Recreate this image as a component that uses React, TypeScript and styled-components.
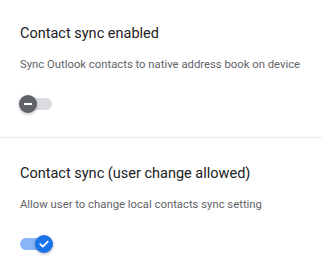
import React from "react";
import styled, { createGlobalStyle } from "styled-components";

const Global = createGlobalStyle`
  html, body { margin: 0; padding: 0; background: #ffffff; }
  body { font-family: Roboto, "Liberation Sans", Arial, sans-serif; }
`;

const Page = styled.div`
  width: 322px;
  display: flex;
  flex-direction: column;
`;

const Section = styled.section`
  display: flex;
  flex-direction: column;
  align-items: flex-start;
  padding: 24px 20px 24px;
`;

const Title = styled.h2`
  margin: 0;
  font-size: 14.5px;
  line-height: 20px;
  font-weight: 400;
  color: #202124;
`;

const Description = styled.p`
  margin: 13px 0 0;
  font-size: 11.3px;
  line-height: 15px;
  color: #5f6368;
  white-space: nowrap;
`;

const Divider = styled.hr`
  margin: 0 0 2px;
  border: 0;
  height: 1px;
  background: #e8eaed;
`;

const SwitchRoot = styled.button`
  position: relative;
  margin-top: 23px;
  width: 32px;
  height: 18px;
  padding: 0;
  border: 0;
  background: transparent;
  cursor: pointer;
  display: flex;
  align-items: center;
`;

const Track = styled.span<{ $on: boolean }>`
  width: 32px;
  height: 12px;
  border-radius: 6px;
  background: ${(p) => (p.$on ? "#8ab4f8" : "#dadce0")};
`;

const Thumb = styled.span<{ $on: boolean }>`
  position: absolute;
  top: 0;
  left: ${(p) => (p.$on ? "15px" : "-1px")};
  width: 18px;
  height: 18px;
  border-radius: 50%;
  background: ${(p) => (p.$on ? "#1a73e8" : "#5f6368")};
  box-shadow: 0 1px 3px rgba(0, 0, 0, 0.3);
  display: flex;
  align-items: center;
  justify-content: center;
`;

function Toggle({ on }: { on: boolean }) {
  return (
    <SwitchRoot role="switch" aria-checked={on}>
      <Track $on={on} />
      <Thumb $on={on}>
        {on ? (
          <svg width="12" height="12" viewBox="0 0 12 12" fill="none">
            <path d="M2.3 6.2 L4.8 8.6 L9.8 3.6" stroke="#fff" strokeWidth="1.8" strokeLinecap="round" strokeLinejoin="round" />
          </svg>
        ) : (
          <svg width="12" height="12" viewBox="0 0 12 12" fill="none">
            <path d="M2 6 H10" stroke="#fff" strokeWidth="2" />
          </svg>
        )}
      </Thumb>
    </SwitchRoot>
  );
}

export default function App() {
  return (
    <>
      <Global />
      <Page>
        <Section>
          <Title>Contact sync enabled</Title>
          <Description>Sync Outlook contacts to native address book on device</Description>
          <Toggle on={false} />
        </Section>
        <Divider />
        <Section>
          <Title>Contact sync (user change allowed)</Title>
          <Description>Allow user to change local contacts sync setting</Description>
          <Toggle on={true} />
        </Section>
      </Page>
    </>
  );
}
